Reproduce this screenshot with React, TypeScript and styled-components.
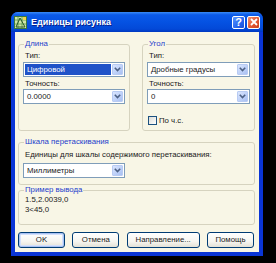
import React from "react";
import styled, { createGlobalStyle, css } from "styled-components";

const GlobalStyle = createGlobalStyle`
  * { box-sizing: border-box; }
  html, body { margin: 0; padding: 0; background: #000; }
  body { font-family: "Liberation Sans", Arial, sans-serif; }
`;

const Page = styled.div`
  width: 276px;
  height: 263px;
  padding: 12px 13px 7px 11px;
  background: #000;
`;

const Window = styled.div`
  width: 252px;
  height: 244px;
  display: flex;
  flex-direction: column;
  background: #0a35d6;
  border-radius: 7px 7px 0 0;
  overflow: hidden;
`;

const TitleBar = styled.div`
  height: 20px;
  flex: none;
  display: flex;
  align-items: center;
  padding: 0 3px 0 3px;
  background: linear-gradient(
    to bottom,
    #3a8cf6 0%,
    #0b5ae8 14%,
    #0552e2 50%,
    #0349d8 85%,
    #0038c0 100%
  );
`;

const TitleText = styled.span`
  flex: 1;
  margin-left: 4px;
  color: #fff;
  font-size: 9px;
  font-weight: bold;
  text-shadow: 1px 1px 0 #0a1e8c;
  white-space: nowrap;
`;

const CaptionButton = styled.div<{ $kind: "help" | "close" }>`
  width: 13px;
  height: 13px;
  margin-left: 2px;
  border: 1px solid #fff;
  border-radius: 2px;
  display: flex;
  align-items: center;
  justify-content: center;
  color: #fff;
  font-size: 11px;
  font-weight: bold;
  line-height: 1;
  ${(p) =>
    p.$kind === "help"
      ? css`
          background: linear-gradient(135deg, #5a96ff 0%, #2766ef 60%, #1a4fd6 100%);
        `
      : css`
          background: linear-gradient(135deg, #f0906e 0%, #e0542f 60%, #c8401c 100%);
        `}
`;

const Body = styled.div`
  flex: 1;
  margin: 0 4px 4px 4px;
  background: #f8f6e6;
  padding: 7px 4px 4px 3px;
  display: flex;
  flex-direction: column;
  font-size: 7.8px;
  color: #1a1a1a;
`;

const TopRow = styled.div`
  display: grid;
  grid-template-columns: 112px 113px;
  column-gap: 12px;
`;

const Group = styled.fieldset<{ $h: number }>`
  margin: 0;
  min-width: 0;
  height: ${(p) => p.$h}px;
  border: 1px solid #d6d3bf;
  border-radius: 3px;
  padding: 0 4px;
  display: block;
`;

const Legend = styled.legend`
  padding: 0 1px;
  margin-left: 1px;
  font-size: 7.8px;
  line-height: 10px;
  color: #1c40cc;
`;

const FieldLabel = styled.div<{ $mt?: number }>`
  height: 11px;
  line-height: 11px;
  padding-left: 2px;
  margin-top: ${(p) => p.$mt ?? 0}px;
  white-space: nowrap;
`;

const Combo = styled.div<{ $mt?: number; $w?: number }>`
  height: 15px;
  width: ${(p) => (p.$w ? `${p.$w}px` : "100%")};
  margin-top: ${(p) => p.$mt ?? 0}px;
  border: 1px solid #7f9db9;
  background: #fff;
  display: flex;
  align-items: center;
  padding: 1px;
`;

const ComboValue = styled.div<{ $selected?: boolean }>`
  flex: 1;
  height: 11px;
  line-height: 11px;
  padding-left: 2px;
  margin-right: 1px;
  white-space: nowrap;
  ${(p) =>
    p.$selected &&
    css`
      background: #1f52c8;
      color: #fff;
    `}
`;

const DropButton = styled.div`
  width: 11px;
  height: 11px;
  border-radius: 1px;
  background: linear-gradient(135deg, #dbe6fe 0%, #bccff8 60%, #a9c0f1 100%);
  border: 1px solid #b8cbf3;
  display: flex;
  align-items: center;
  justify-content: center;
`;

const CheckRow = styled.div`
  margin-top: 10px;
  height: 12px;
  display: flex;
  align-items: center;
  padding-left: 1px;
  gap: 2px;
`;

const CheckBox = styled.div`
  width: 9px;
  height: 9px;
  border: 1px solid #1c5180;
  background: linear-gradient(135deg, #dcdcd6 0%, #fff 100%);
`;

const CheckLabel = styled.span`
  line-height: 11px;
`;

const ScaleGroup = styled(Group)`
  margin-top: 6px;
`;

const SampleGroup = styled(Group)`
  margin-top: 0;
`;

const SampleLine = styled.div`
  height: 10px;
  line-height: 10px;
  padding-left: 2px;
  white-space: nowrap;
`;

const ButtonRow = styled.div`
  margin-top: 7px;
  display: flex;
  justify-content: space-between;
  padding-right: 1px;
`;

const Button = styled.div<{ $w: number; $default?: boolean }>`
  width: ${(p) => p.$w}px;
  height: 16px;
  border: 1px solid #003c74;
  border-radius: 3px;
  background: linear-gradient(to bottom, #ffffff 0%, #f6f5f0 60%, #e3e1d6 100%);
  display: flex;
  align-items: center;
  justify-content: center;
  font-size: 7.8px;
  line-height: 1;
  white-space: nowrap;
  ${(p) =>
    p.$default &&
    css`
      box-shadow: inset 0 0 0 1px #a8c2f3, inset 0 0 0 2px #d4e0fb;
    `}
`;

const Chevron = () => (
  <svg width="7" height="5" viewBox="0 0 7 5">
    <path d="M0.8 0.8 L3.5 3.5 L6.2 0.8" fill="none" stroke="#4d6185" strokeWidth="1.6" />
  </svg>
);

const AppIcon = () => (
  <svg width="13" height="13" viewBox="0 0 13 13">
    <rect x="0.5" y="0.5" width="12" height="12" fill="#cfe6a8" stroke="#3c7a3c" />
    <path d="M4 1 V12 M8 1 V12 M1 4 H12 M1 8 H12" stroke="#5c9a4c" strokeWidth="0.8" />
    <path d="M2 11 L6 2 L11 11 Z" fill="none" stroke="#2a5a2a" strokeWidth="1" />
    <rect x="9" y="1" width="3" height="3" fill="#f2d54a" />
  </svg>
);

const Select = ({ value, selected, mt, w }: { value: string; selected?: boolean; mt?: number; w?: number }) => (
  <Combo $mt={mt} $w={w}>
    <ComboValue $selected={selected}>{value}</ComboValue>
    <DropButton>
      <Chevron />
    </DropButton>
  </Combo>
);

export default function App() {
  return (
    <>
      <GlobalStyle />
      <Page>
        <Window>
          <TitleBar>
            <AppIcon />
            <TitleText>Единицы рисунка</TitleText>
            <CaptionButton $kind="help">?</CaptionButton>
            <CaptionButton $kind="close">
              <svg width="8" height="8" viewBox="0 0 8 8">
                <path d="M1 1 L7 7 M7 1 L1 7" stroke="#fff" strokeWidth="1.8" />
              </svg>
            </CaptionButton>
          </TitleBar>
          <Body>
            <TopRow>
              <Group $h={92}>
                <Legend>Длина</Legend>
                <FieldLabel $mt={1}>Тип:</FieldLabel>
                <Select value="Цифровой" selected mt={1} />
                <FieldLabel $mt={1}>Точность:</FieldLabel>
                <Select value="0.0000" />
              </Group>
              <Group $h={92}>
                <Legend>Угол</Legend>
                <FieldLabel $mt={1}>Тип:</FieldLabel>
                <Select value="Дробные градусы" mt={1} />
                <FieldLabel $mt={1}>Точность:</FieldLabel>
                <Select value="0" />
                <CheckRow>
                  <CheckBox />
                  <CheckLabel>По ч.с.</CheckLabel>
                </CheckRow>
              </Group>
            </TopRow>
            <ScaleGroup $h={48}>
              <Legend>Шкала перетаскивания</Legend>
              <FieldLabel $mt={2}>Единицы для шкалы содержимого перетаскивания:</FieldLabel>
              <Select value="Миллиметры" mt={3} w={102} />
            </ScaleGroup>
            <SampleGroup $h={40}>
              <Legend>Пример вывода</Legend>
              <SampleLine>1.5,2.0039,0</SampleLine>
              <SampleLine>3&lt;45,0</SampleLine>
            </SampleGroup>
            <ButtonRow>
              <Button $w={47} $default>
                OK
              </Button>
              <Button $w={47}>Отмена</Button>
              <Button $w={73}>Направление...</Button>
              <Button $w={47}>Помощь</Button>
            </ButtonRow>
          </Body>
        </Window>
      </Page>
    </>
  );
}
